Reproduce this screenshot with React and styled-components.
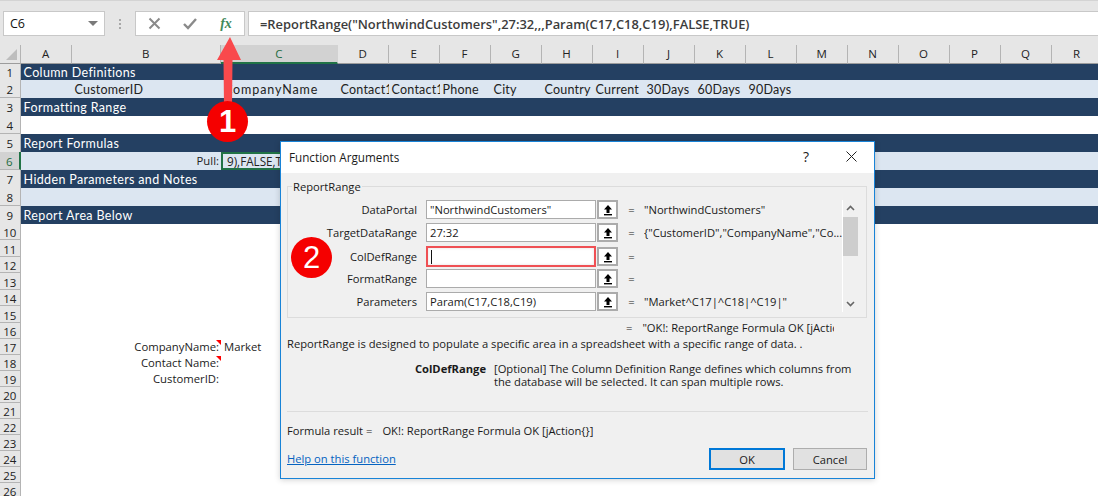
import React from 'react';
import styled, { createGlobalStyle } from 'styled-components';

const GlobalStyle = createGlobalStyle`
  html, body {
    margin: 0;
    padding: 0;
    background: #fff;
    overflow: hidden;
  }
  * { box-sizing: border-box; }
`;

const uiFont = `"Open Sans", "Noto Sans", "Liberation Sans", sans-serif`;
const sheetFont = `"Lato", "Open Sans", sans-serif`;
const gridCols = '20.6px 51px 149.4px 116.6px repeat(15, 51px)';

const Page = styled.div`
  position: relative;
  width: 1098px;
  height: 496px;
  overflow: hidden;
  background: #fff;
  color: #111;
  font-family: ${uiFont};
`;

const FormulaBar = styled.div`
  height: 45px;
  background: #e6e6e6;
  border-top: 1px solid #d4d4d4;
  padding: 10px 0 9px 3px;
  display: flex;
  align-items: stretch;
`;

const NameBox = styled.div`
  width: 102px;
  background: #fff;
  border: 1px solid #c8c8c8;
  display: flex;
  align-items: center;
  justify-content: space-between;
  padding: 0 6px;
  font-size: 12.5px;
`;

const Caret = styled.span`
  width: 0;
  height: 0;
  border-left: 5px solid transparent;
  border-right: 5px solid transparent;
  border-top: 5px solid #7a7a7a;
`;

const Grip = styled.div`
  width: 30px;
  display: flex;
  flex-direction: column;
  align-items: center;
  justify-content: center;
  gap: 2px;
  i {
    width: 2px;
    height: 2px;
    background: #a8a8a8;
  }
`;

const FormulaButtons = styled.div`
  width: 110px;
  background: #fff;
  border: 1px solid #c8c8c8;
  display: grid;
  grid-template-columns: repeat(3, 36px);
  align-items: center;
  justify-items: center;
`;

const Fx = styled.span`
  font-family: "Liberation Serif", serif;
  font-style: italic;
  font-weight: 700;
  font-size: 14px;
  color: #3f8a5c;
`;

const FormulaInput = styled.div`
  flex: 1;
  margin-left: 3px;
  background: #fff;
  border: 1px solid #c8c8c8;
  border-right: none;
  display: flex;
  align-items: center;
  padding-left: 11px;
  font-size: 12.9px;
  font-weight: 600;
  color: #3c3c3c;
  white-space: nowrap;
`;

const SheetRow = styled.div`
  display: grid;
  grid-template-columns: ${gridCols};
  height: ${(p) => p.$h}px;
  background: ${(p) => (p.$tone === 'navy' ? '#244062' : p.$tone === 'light' ? '#dce6f1' : '#fff')};
  color: ${(p) => (p.$tone === 'navy' ? '#fff' : '#222')};
  font-family: ${sheetFont};
  font-size: 12.5px;
  line-height: ${(p) => p.$h + 2}px;
`;

const ColHead = styled.div`
  background: ${(p) => (p.$active ? '#d2d2d2' : '#e6e6e6')};
  color: ${(p) => (p.$active ? '#1d6b41' : '#222')};
  font-family: ${uiFont};
  font-size: 11.5px;
  text-align: center;
  line-height: 17px;
  border-right: 1px solid ${(p) => (p.$active ? '#d2d2d2' : '#b4b4b4')};
  border-bottom: ${(p) => (p.$active ? '2px solid #217346' : '1px solid #9c9c9c')};
`;

const Corner = styled.div`
  background: #e6e6e6;
  border-right: 1px solid #b4b4b4;
  border-bottom: 1px solid #9c9c9c;
  position: relative;
  &::after {
    content: '';
    position: absolute;
    right: 3px;
    bottom: 3px;
    border-left: 11px solid transparent;
    border-bottom: 11px solid #bdbdbd;
  }
`;

const RowHead = styled.div`
  background: ${(p) => (p.$active ? '#d2d2d2' : '#e6e6e6')};
  color: ${(p) => (p.$active ? '#1d6b41' : '#222')};
  font-family: ${uiFont};
  font-size: 11.5px;
  text-align: center;
  border-right: ${(p) => (p.$active ? '2px solid #217346' : '1px solid #b4b4b4')};
  border-bottom: 1px solid #b4b4b4;
  overflow: hidden;
`;

const Cell = styled.div`
  grid-column: span ${(p) => p.$span || 1};
  position: relative;
  min-width: 0;
  overflow: ${(p) => (p.$spill ? 'visible' : 'hidden')};
  white-space: nowrap;
  padding: 0 2px 0 3px;
  text-align: ${(p) => p.$align || 'left'};
  letter-spacing: ${(p) => p.$track || 0.2}px;
`;

const LabelCell = styled(Cell)`
  font-family: ${uiFont};
  font-size: 11.3px;
  letter-spacing: 0;
  line-height: ${(p) => p.$lh || 16}px;
`;

const NoteCell = styled(LabelCell)`
  overflow: visible;
  &::after {
    content: '';
    position: absolute;
    top: 1px;
    right: 0;
    border-left: 5px solid transparent;
    border-top: 5px solid #f00;
  }
`;

const SelectedCell = styled(LabelCell)`
  border: 2px solid #217346;
  padding-left: 4px;
  font-size: 11.7px;
`;

const Dialog = styled.div`
  position: absolute;
  left: 280px;
  top: 141px;
  width: 595px;
  height: 338px;
  background: #f0f0f0;
  border: 1px solid #1883d7;
  display: flex;
  flex-direction: column;
  font-size: 11.2px;
  color: #1a1a1a;
  box-shadow: 0 1px 6px rgba(0, 0, 0, 0.18);
`;

const TitleBar = styled.div`
  height: 31px;
  background: #fff;
  display: flex;
  align-items: center;
  padding: 0 17px 2px 8px;
  font-size: 11.7px;
`;

const Title = styled.span`
  flex: 1;
`;

const HelpMark = styled.span`
  font-size: 14px;
  margin-right: 37px;
`;

const GroupBox = styled.div`
  position: relative;
  margin: 13px 7px 0 6px;
  height: 132px;
  border: 1px solid #dcdcdc;
  padding: 13px 8px 0 0;
  display: flex;
`;

const Legend = styled.span`
  position: absolute;
  left: 4px;
  top: -8px;
  padding: 0 1px;
  background: #f0f0f0;
  line-height: 15px;
`;

const ArgList = styled.div`
  flex: 1;
  display: flex;
  flex-direction: column;
  gap: 4px;
`;

const ArgRow = styled.div`
  display: grid;
  grid-template-columns: 138px 170px 22px 26px 1fr;
  height: 19px;
  align-items: center;
`;

const ArgLabel = styled.span`
  text-align: right;
  padding-right: 9px;
`;

const ArgInput = styled.div`
  height: ${(p) => (p.$focus ? 21 : 19)}px;
  background: #fff;
  border: ${(p) => (p.$focus ? '2px solid #ef5054' : '1px solid #ababab')};
  display: flex;
  align-items: center;
  padding-left: 3px;
  white-space: nowrap;
  overflow: hidden;
  box-shadow: ${(p) => (p.$focus ? 'inset 0 0 3px rgba(0,0,0,0.12)' : 'none')};
`;

const CaretBar = styled.i`
  width: 1px;
  height: 14px;
  background: #111;
`;

const RefButton = styled.div`
  height: 19px;
  margin-left: 1px;
  background: #fff;
  border: 2px solid #ababab;
  display: flex;
  align-items: center;
  justify-content: center;
`;

const Equals = styled.span`
  text-align: center;
  padding-left: 1px;
`;

const ArgValue = styled.span`
  white-space: nowrap;
  overflow: hidden;
`;

const Scroller = styled.div`
  width: 16px;
  height: 112px;
  border-left: 1px solid #fff;
  display: flex;
  flex-direction: column;
  align-items: center;
  justify-content: space-between;
  padding: 5px 0;
  position: relative;
`;

const Thumb = styled.div`
  position: absolute;
  top: 17px;
  left: 0;
  width: 15px;
  height: 39px;
  background: #cdcdcd;
`;

const ResultLine = styled.div`
  margin-top: 2px;
  padding-left: 345px;
  width: 553px;
  height: 16px;
  line-height: 16px;
  white-space: nowrap;
  overflow: hidden;
  display: flex;
  gap: 10px;
`;

const Description = styled.div`
  padding-left: 6px;
  line-height: 16px;
`;

const ArgHelp = styled.div`
  margin-top: 10px;
  display: grid;
  grid-template-columns: 205px 1fr;
  column-gap: 8px;
  line-height: 13px;
  padding-right: 16px;
  height: 49px;
`;

const ArgHelpName = styled.b`
  text-align: right;
  font-weight: 700;
`;

const Divider = styled.div`
  margin: 0 6px;
  height: 1px;
  background: #dcdcdc;
`;

const FormulaResult = styled.div`
  margin-top: 11px;
  padding-left: 6px;
  line-height: 16px;
  display: flex;
  gap: 10px;
`;

const Footer = styled.div`
  margin-top: 9px;
  padding: 0 7px 0 6px;
  display: flex;
  align-items: center;
  gap: 8px;
`;

const HelpLink = styled.a`
  flex: 1;
  color: #0563c1;
  text-decoration: underline;
  padding-bottom: 2px;
`;

const DialogButton = styled.div`
  width: ${(p) => (p.$primary ? 76 : 74)}px;
  height: 22px;
  background: #e1e1e1;
  border: ${(p) => (p.$primary ? '2px solid #0078d7' : '1px solid #adadad')};
  display: flex;
  align-items: center;
  justify-content: center;
`;

const Callout = styled.div`
  position: absolute;
  left: ${(p) => p.$x - 21}px;
  top: ${(p) => p.$y - 21}px;
  width: 41px;
  height: 41px;
  border-radius: 50%;
  background: #f50000;
  color: #fff;
  font-family: "Liberation Sans", sans-serif;
  font-weight: ${(p) => p.$weight || 400};
  font-size: 31px;
  display: flex;
  align-items: center;
  justify-content: center;
`;

const ArrowSvg = styled.svg`
  position: absolute;
  left: 212px;
  top: 32px;
`;

const columns = ['A', 'B', 'C', 'D', 'E', 'F', 'G', 'H', 'I', 'J', 'K', 'L', 'M', 'N', 'O', 'P', 'Q', 'R'];
const fieldNames = ['', 'CustomerID', 'CompanyName', 'Contact1', 'Contact1', 'Phone', 'City', 'Country', 'Current', '30Days', '60Days', '90Days'];
const args = [
  { name: 'DataPortal', value: '"NorthwindCustomers"', result: '"NorthwindCustomers"' },
  { name: 'TargetDataRange', value: '27:32', result: '{"CustomerID","CompanyName","Co...' },
  { name: 'ColDefRange', focus: true },
  { name: 'FormatRange' },
  { name: 'Parameters', value: 'Param(C17,C18,C19)', result: '"Market^C17|^C18|^C19|"' },
];

// row heights read off the reference, rows below 9 alternate 16/17
const rowHeight = (n) => {
  if (n === 1) return 17;
  if (n <= 9) return 18;
  if (n <= 16) return n % 2 === 0 ? 16 : 17;
  return 16;
};

const navyRows = {
  1: 'Column Definitions',
  3: 'Formatting Range',
  5: 'Report Formulas',
  7: 'Hidden Parameters and Notes',
  9: 'Report Area Below',
};

const RefIcon = () => (
  <svg width="12" height="12" viewBox="0 0 12 12">
    <path d="M6 1 L10 5.5 H7.5 V9 H4.5 V5.5 H2 Z" fill="#000" />
    <rect x="2" y="10" width="8" height="1.4" fill="#000" />
  </svg>
);

const renderCells = (n) => {
  if (navyRows[n]) {
    return (
      <Cell $span={18} $spill $track={0.35}>
        {navyRows[n]}
      </Cell>
    );
  }
  if (n === 2) {
    return fieldNames.map((name, i) => (
      <Cell key={i} $track={name === 'CompanyName' ? 0.9 : 0.2}>
        {name}
      </Cell>
    ));
  }
  if (n === 6) {
    return (
      <>
        <Cell />
        <LabelCell $align="right" $lh={18}>
          Pull:
        </LabelCell>
        <SelectedCell $lh={14}>9),FALSE,TRUE)</SelectedCell>
      </>
    );
  }
  if (n === 17) {
    return (
      <>
        <Cell />
        <NoteCell $align="right">CompanyName:</NoteCell>
        <LabelCell>Market</LabelCell>
      </>
    );
  }
  if (n === 18) {
    return (
      <>
        <Cell />
        <NoteCell $align="right">Contact Name:</NoteCell>
      </>
    );
  }
  if (n === 19) {
    return (
      <>
        <Cell />
        <LabelCell $align="right">CustomerID:</LabelCell>
      </>
    );
  }
  return null;
};

const rowTone = (n) => {
  if (navyRows[n]) return 'navy';
  if (n === 2 || n === 6 || n === 8) return 'light';
  return 'plain';
};

export default function App() {
  const rows = Array.from({ length: 26 }, (_, i) => i + 1);

  return (
    <Page>
      <GlobalStyle />
      <FormulaBar>
        <NameBox>
          C6
          <Caret />
        </NameBox>
        <Grip>
          <i />
          <i />
          <i />
        </Grip>
        <FormulaButtons>
          <svg width="13" height="13" viewBox="0 0 13 13">
            <path d="M1.5 1.5 L11.5 11.5 M11.5 1.5 L1.5 11.5" stroke="#8a8a8a" strokeWidth="2" fill="none" />
          </svg>
          <svg width="14" height="13" viewBox="0 0 14 13">
            <path d="M1 7 L5 11 L13 2" stroke="#8a8a8a" strokeWidth="2.4" fill="none" />
          </svg>
          <Fx>fx</Fx>
        </FormulaButtons>
        <FormulaInput>=ReportRange("NorthwindCustomers",27:32,,,Param(C17,C18,C19),FALSE,TRUE)</FormulaInput>
      </FormulaBar>

      <SheetRow $h={18}>
        <Corner />
        {columns.map((c) => (
          <ColHead key={c} $active={c === 'C'}>
            {c}
          </ColHead>
        ))}
      </SheetRow>

      {rows.map((n) => (
        <SheetRow key={n} $h={rowHeight(n)} $tone={rowTone(n)}>
          <RowHead $active={n === 6}>{n}</RowHead>
          {renderCells(n)}
        </SheetRow>
      ))}

      <ArrowSvg width="34" height="76" viewBox="0 0 34 76">
        <path d="M18 5 L29 28 H20.5 L20 74 H12 L11.5 28 H5 Z" fill="#f9494c" />
      </ArrowSvg>
      <Callout $x={228} $y={122} $weight={700}>
        1
      </Callout>

      <Dialog>
        <TitleBar>
          <Title>Function Arguments</Title>
          <HelpMark>?</HelpMark>
          <svg width="11" height="11" viewBox="0 0 11 11">
            <path d="M0.5 0.5 L10.5 10.5 M10.5 0.5 L0.5 10.5" stroke="#222" strokeWidth="1" fill="none" />
          </svg>
        </TitleBar>

        <GroupBox>
          <Legend>ReportRange</Legend>
          <ArgList>
            {args.map((a) => (
              <ArgRow key={a.name}>
                <ArgLabel>{a.name}</ArgLabel>
                <ArgInput $focus={a.focus}>{a.focus ? <CaretBar /> : a.value}</ArgInput>
                <RefButton>
                  <RefIcon />
                </RefButton>
                <Equals>=</Equals>
                <ArgValue>{a.result}</ArgValue>
              </ArgRow>
            ))}
          </ArgList>
          <Scroller>
            <svg width="9" height="6" viewBox="0 0 9 6">
              <path d="M1 5 L4.5 1.5 L8 5" stroke="#666" strokeWidth="1.6" fill="none" />
            </svg>
            <Thumb />
            <svg width="9" height="6" viewBox="0 0 9 6">
              <path d="M1 1 L4.5 4.5 L8 1" stroke="#666" strokeWidth="1.6" fill="none" />
            </svg>
          </Scroller>
        </GroupBox>

        <ResultLine>
          <span>=</span>
          <span>"OK!: ReportRange Formula OK [jAction{'{}'}]"</span>
        </ResultLine>
        <Description>ReportRange is designed to populate a specific area in a spreadsheet with a specific range of data. .</Description>
        <ArgHelp>
          <ArgHelpName>ColDefRange</ArgHelpName>
          <span>
            [Optional] The Column Definition Range defines which columns from the database will be selected. It can span
            multiple rows.
          </span>
        </ArgHelp>
        <Divider />
        <FormulaResult>
          <span>Formula result =</span>
          <span>OK!: ReportRange Formula OK [jAction{'{}'}]</span>
        </FormulaResult>
        <Footer>
          <HelpLink>Help on this function</HelpLink>
          <DialogButton $primary>OK</DialogButton>
          <DialogButton>Cancel</DialogButton>
        </Footer>
      </Dialog>

      <Callout $x={312} $y={258}>
        2
      </Callout>
    </Page>
  );
}
